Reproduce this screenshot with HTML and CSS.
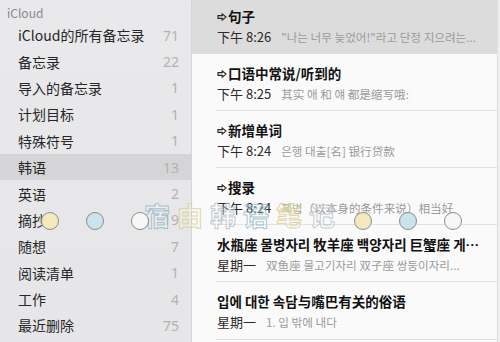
FILE: index.html
```html
<!DOCTYPE html>
<html>
<head>
<meta charset="utf-8">
<link rel="stylesheet" href="styles.css">
</head>
<body>
<div class="app">
  <aside class="sidebar">
    <div class="group">iCloud</div>
    <ul class="folders">
      <li class="folder"><span>iCloud的所有备忘录</span><span class="count">71</span></li>
      <li class="folder"><span>备忘录</span><span class="count">22</span></li>
      <li class="folder"><span>导入的备忘录</span><span class="count">1</span></li>
      <li class="folder"><span>计划目标</span><span class="count">1</span></li>
      <li class="folder"><span>特殊符号</span><span class="count">1</span></li>
      <li class="folder active"><span>韩语</span><span class="count">13</span></li>
      <li class="folder"><span>英语</span><span class="count">2</span></li>
      <li class="folder"><span>摘抄</span><span class="count">19</span></li>
      <li class="folder"><span>随想</span><span class="count">7</span></li>
      <li class="folder"><span>阅读清单</span><span class="count">1</span></li>
      <li class="folder"><span>工作</span><span class="count">4</span></li>
      <li class="folder"><span>最近删除</span><span class="count">75</span></li>
    </ul>
  </aside>
  <main class="notes">
    <ul class="list">
      <li class="note selected">
        <div class="title"><svg class="arrow" viewBox="0 0 10 8"><path d="M1 2.6h4.2V0.9L9 4 5.2 7.1V5.4H1z"/></svg>句子</div>
        <div class="sub"><span class="time">下午 8:26</span><span class="preview">"나는 너무 늦었어!"라고 단정 지으려는...</span></div>
      </li>
      <li class="note">
        <div class="title"><svg class="arrow" viewBox="0 0 10 8"><path d="M1 2.6h4.2V0.9L9 4 5.2 7.1V5.4H1z"/></svg>口语中常说/听到的</div>
        <div class="sub"><span class="time">下午 8:25</span><span class="preview">其实 애 和 얘 都是缩写哦:</span></div>
      </li>
      <li class="note">
        <div class="title"><svg class="arrow" viewBox="0 0 10 8"><path d="M1 2.6h4.2V0.9L9 4 5.2 7.1V5.4H1z"/></svg>新增单词</div>
        <div class="sub"><span class="time">下午 8:24</span><span class="preview">은행 대출[名] 银行贷款</span></div>
      </li>
      <li class="note">
        <div class="title"><svg class="arrow" viewBox="0 0 10 8"><path d="M1 2.6h4.2V0.9L9 4 5.2 7.1V5.4H1z"/></svg>搜录</div>
        <div class="sub"><span class="time">下午 8:24</span><span class="preview">제법（以本身的条件来说）相当好</span></div>
      </li>
      <li class="note">
        <div class="title">水瓶座 물병자리 牧羊座 백양자리 巨蟹座 게…</div>
        <div class="sub"><span class="time">星期一</span><span class="preview">双鱼座 물고기자리 双子座 쌍둥이자리...</span></div>
      </li>
      <li class="note">
        <div class="title">입에 대한 속담与嘴巴有关的俗语</div>
        <div class="sub"><span class="time">星期一</span><span class="preview">1. 입 밖에 내다</span></div>
      </li>
    </ul>
  </main>
  <div class="edge"></div>
</div>
<div class="watermark">
  <span class="c-blue">宿</span><span class="c-yellow">由</span><span class="c-gray">韩</span><span class="c-blue">语</span><span class="c-yellow">笔</span><span class="c-gray">记</span>
</div>
<div class="dots dots-left"><i class="dot yellow"></i><i class="dot blue"></i><i class="dot white"></i></div>
<div class="dots dots-right"><i class="dot yellow"></i><i class="dot blue"></i><i class="dot white"></i></div>
</body>
</html>
```

FILE: styles.css
```css
* { box-sizing: border-box; }
html, body { margin: 0; padding: 0; }
body {
  width: 500px;
  height: 342px;
  overflow: hidden;
  position: relative;
  font-family: "Noto Sans CJK SC", "Noto Sans", sans-serif;
  background: #f9f9f9;
}
ul { list-style: none; margin: 0; padding: 0; }

.app { display: flex; height: 342px; }

.sidebar {
  width: 192px;
  flex: none;
  background: linear-gradient(#e9e8ea, #e6e5e8);
  border-right: 1px solid #d6d6d6;
}
.group {
  height: 22px;
  padding: 4px 0 0 7px;
  font-size: 12px;
  line-height: 18px;
  color: #8a8a8a;
}
.folder {
  height: 26.4px;
  display: flex;
  align-items: center;
  justify-content: space-between;
  padding: 0 12px 0 18px;
  font-size: 14px;
  color: #262626;
}
.folder .count {
  font-family: "Noto Sans", sans-serif;
  color: #b2b2b2;
  font-size: 14px;
}
.folder.active { background: #d5d4d6; }

.notes {
  flex: 1;
  overflow: hidden;
  background: #fafafa;
}
.list { margin-top: -3.5px; }
.note {
  height: 57.2px;
  padding: 10px 14px 0 25px;
  position: relative;
}
.note::after {
  content: "";
  position: absolute;
  left: 24px; right: 0; bottom: 0;
  border-bottom: 1px solid #e3e3e3;
}
.note.selected { background: #dcdcdc; }
.note.selected::after { display: none; }
.title {
  display: block;
  font-size: 13.5px;
  font-weight: bold;
  color: #111;
  line-height: 19px;
  white-space: nowrap;
  overflow: hidden;
}
.arrow {
  width: 10px; height: 8px;
  margin-right: 1px;
  fill: none;
  stroke: #222;
  stroke-width: 1.1;
  vertical-align: 1px;
}
.sub {
  line-height: 18px;
  white-space: nowrap;
  overflow: hidden;
}
.time { font-size: 13px; color: #2a2a2a; margin-right: 10px; }
.preview { font-size: 11.6px; color: #9a9a9a; }

.edge {
  width: 3px;
  flex: none;
  background: #efefef;
  border-left: 1px solid #dedede;
}

.watermark {
  position: absolute;
  left: 144px;
  top: 201px;
  font-size: 26px;
  font-weight: bold;
  letter-spacing: 7px;
  line-height: 28px;
  color: rgba(255,255,255,0.3);
  -webkit-text-stroke: 1px #c6d2d6;
}
.watermark .c-blue { -webkit-text-stroke-color: rgba(140,180,195,0.75); }
.watermark .c-yellow { -webkit-text-stroke-color: rgba(215,205,140,0.8); }
.watermark .c-gray { -webkit-text-stroke-color: rgba(175,185,190,0.75); }

.dots {
  position: absolute;
  top: 212px;
  display: flex;
  gap: 27px;
}
.dots-left { left: 41px; }
.dots-right { left: 354px; }
.dot {
  width: 18px; height: 18px;
  border-radius: 50%;
  border: 1.3px solid #8c8c8c;
  display: block;
}
.dot.yellow { background: #f3e9bd; }
.dot.blue { background: #cbe3ea; }
.dot.white { background: #f7f7f7; }
```
